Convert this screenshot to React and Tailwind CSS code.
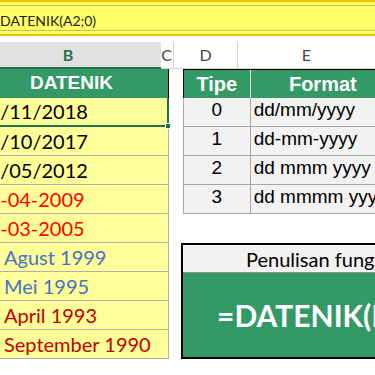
import React from "react";

const rows = [
  { text: "05/11/2018", color: "text-black", cut: true },
  { text: "17/10/2017", color: "text-black", cut: true },
  { text: "21/05/2012", color: "text-black", cut: true },
  { text: "12-04-2009", color: "text-[#ff0000]", cut: true },
  { text: "08-03-2005", color: "text-[#ff0000]", cut: true },
  { text: "Agust 1999", color: "text-[#4472c4]" },
  { text: "Mei 1995", color: "text-[#4472c4]" },
  { text: "April 1993", color: "text-[#c00000]" },
  { text: "September 1990", color: "text-[#c00000]" },
];

const types = [
  ["0", "dd/mm/yyyy"],
  ["1", "dd-mm-yyyy"],
  ["2", "dd mmm yyyy"],
  ["3", "dd mmmm yyyy"],
];

export default function App() {
  return (
    <div className="w-[375px] h-[375px] overflow-hidden bg-white font-['Lato',sans-serif]">
      {/* formula bar */}
      <div className="h-[36px] bg-[#ffff66] border-y-2 border-[#f2c200] py-[3px] overflow-hidden">
        <div className="h-full border-y border-[#c9bf5c] flex items-center pt-[5px] whitespace-nowrap">
          <span className="ml-[-8px] text-[14px] text-[#222]">=DATENIK(A2;0)</span>
        </div>
      </div>

      {/* column letters */}
      <div className="mt-[6px] h-[27px] flex text-[16px] whitespace-nowrap">
        <div className="w-[169px] bg-[#e1e1e1] border-b-2 border-[#217346] flex justify-center items-center font-bold text-[#217346] pr-[25px]">
          B
        </div>
        <div className="w-[14px] border-r border-[#d4d4d4] border-b border-b-[#d4d4d4] flex items-center text-[#444]">
          C
        </div>
        <div className="w-[67px] border-r border-[#d4d4d4] border-b border-b-[#d4d4d4] flex justify-center items-center text-[#444]">
          D
        </div>
        <div className="w-[145px] border-b border-[#d4d4d4] flex justify-center items-center text-[#444]">
          E
        </div>
      </div>

      <div className="flex">
        {/* column B */}
        <div className="w-[169px] shrink-0">
          <div className="h-[29px] bg-[#339966] border-r border-black flex items-center justify-center pr-[25px] text-white font-bold text-[19px] font-['Liberation_Sans',Arial,sans-serif]">
            DATENIK
          </div>
          {rows.map((r, i) => (
            <div
              key={i}
              className={
                i === 0
                  ? "relative h-[29px] bg-[#ffff99] border-r-2 border-b-2 border-[#217346] flex items-end pb-[1px] overflow-visible"
                  : "h-[29px] bg-[#ffff99] border-r border-b border-[#b0b0b0] flex items-end pb-[1px] overflow-hidden"
              }
            >
              <span
                className={
                  "text-[20px] leading-[26px] whitespace-nowrap " +
                  r.color +
                  (r.cut ? " ml-[-23px]" : " ml-[4px]")
                }
              >
                {r.text}
              </span>
              {i === 0 && (
                <div className="absolute right-[-4px] bottom-[-4px] w-[6px] h-[6px] bg-[#217346] border border-white" />
              )}
            </div>
          ))}
        </div>

        {/* right side */}
        <div className="flex-1 min-w-0">
          <div className="ml-[14px] w-[212px] font-['Liberation_Sans',Arial,sans-serif] text-[19px] whitespace-nowrap">
            <div className="flex h-[29px] border-t border-l border-black bg-[#339966] text-white font-bold text-[20px]">
              <div className="w-[67px] flex items-center justify-center border-r border-[#e0e0e0]">Tipe</div>
              <div className="w-[145px] flex items-center justify-center">Format</div>
            </div>
            {types.map(([t, f]) => (
              <div key={t} className="flex h-[29px] bg-[#f2f2f2] border-l border-b border-[#a6a6a6] text-black">
                <div className="w-[67px] flex items-end justify-center pb-[2px] border-r border-[#a6a6a6]">{t}</div>
                <div className="w-[145px] flex items-end pl-[3px] pb-[2px]">{f}</div>
              </div>
            ))}
          </div>

          <div className="ml-[12px] mt-[29px] w-[300px] h-[116px] border-2 border-black flex flex-col whitespace-nowrap">
            <div className="h-[28px] bg-[#f2f2f2] border-b border-[#8c8c8c] flex items-center pl-[63px] text-[20px] text-black">
              Penulisan fungsi DATENIK
            </div>
            <div className="flex-1 bg-[#339966] flex items-center pl-[34px] text-white font-bold text-[30px]">
              =DATENIK(Nilai;Tipe)
            </div>
          </div>
        </div>
      </div>
    </div>
  );
}
